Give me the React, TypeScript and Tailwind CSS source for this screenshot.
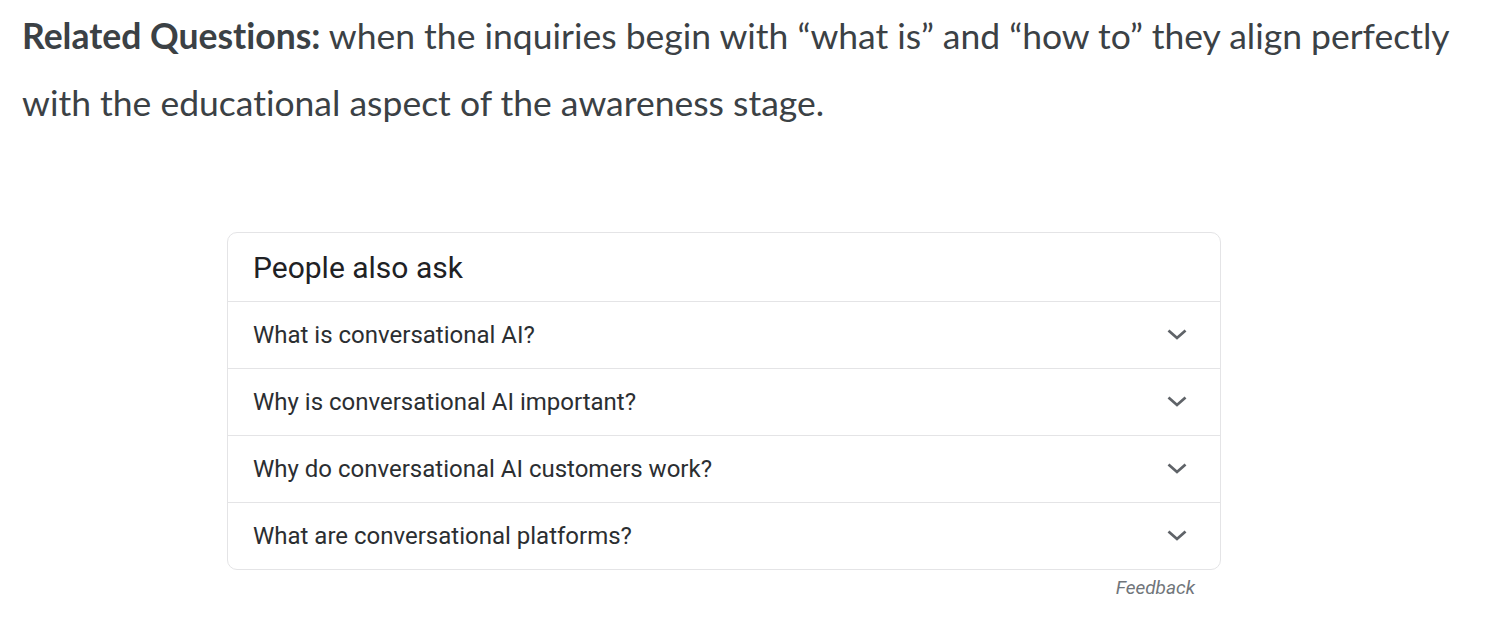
import React from "react";

const Chevron = () => (
  <svg width="24" height="16" viewBox="0 0 24 16" className="text-[#5f6368]">
    <path d="M3.5 3.5 12 11 20.5 3.5" fill="none" stroke="currentColor" strokeWidth="2.8" />
  </svg>
);

const questions = [
  "What is conversational AI?",
  "Why is conversational AI important?",
  "Why do conversational AI customers work?",
  "What are conversational platforms?",
];

export default function App() {
  return (
    <div className="w-[1510px] h-[636px] bg-white overflow-hidden">
      <p
        className="pl-[22px] pt-[2px] text-[35.5px] leading-[67px] text-[#3b4145] [font-variant-ligatures:none]"
        style={{ fontFamily: "Lato, sans-serif" }}
      >
        <span className="font-bold">Related Questions:</span> when the inquiries begin with “what is” and “how to” they align perfectly
        <br />
        with the educational aspect of the awareness stage.
      </p>
      <div className="ml-[227px] mt-[96px] w-[994px]" style={{ fontFamily: "Roboto, sans-serif" }}>
        <div className="border border-[#e4e4e6] rounded-[10px]">
          <div className="h-[68px] flex items-center pl-[25px] text-[30px] text-[#202124]">People also ask</div>
          {questions.map((q) => (
            <div key={q} className="h-[67px] border-t border-[#e4e4e6] flex items-center justify-between pl-[25px] pr-[31px]">
              <span className="text-[24px] text-[#2b2e31]">{q}</span>
              <Chevron />
            </div>
          ))}
        </div>
        <div className="flex justify-end pr-[26px] pt-[4px]">
          <span className="italic text-[19px] text-[#70757a]">Feedback</span>
        </div>
      </div>
    </div>
  );
}
